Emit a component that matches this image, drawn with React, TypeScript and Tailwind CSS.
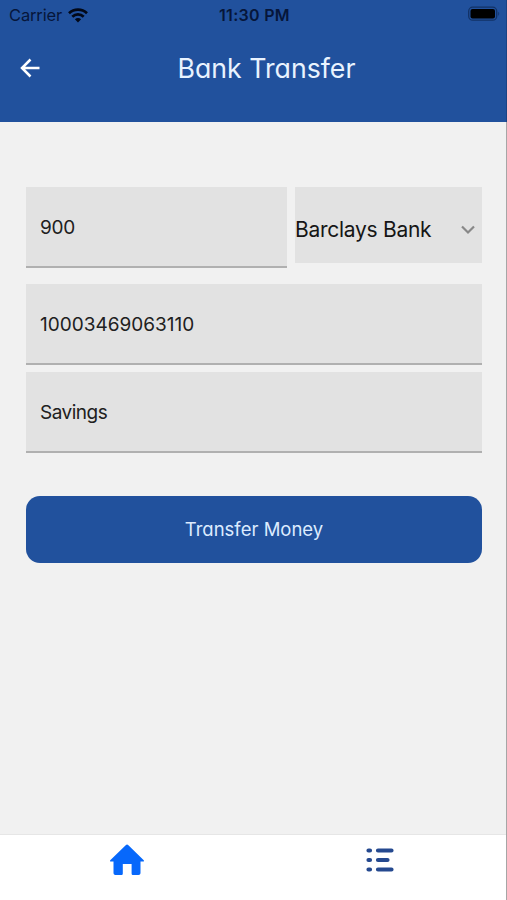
import React, { useState } from 'react';

const ROUNDED_FONT = "font-['Inter',sans-serif] [font-feature-settings:'cv11']";

const StatusBar: React.FC = () => (
  <div className="grid h-[30px] grid-cols-3 items-center pl-[9px] pr-[6px] text-[#06163a]">
    <div className="flex items-center gap-[6px]">
      <span className="text-[16.5px] leading-[28px] tracking-[-0.15px]">Carrier</span>
      <svg viewBox="0 0 20 15" className="h-[15px] w-[20px]" fill="none" stroke="#020817" strokeWidth="2.7">
        <path d="M1 5.2C6 .4 14 .4 19 5.2" />
        <path d="M4.3 8.7c3.2-3 8.2-3 11.4 0" />
        <path d="M6.9 11.2c1.8-1.6 4.400-1.600 6.200 0L10 14.400z" fill="#020817" stroke="none" />
      </svg>
    </div>
    <span className="text-center text-[16px] font-semibold leading-[30px] tracking-[0.3px]">11:30 PM</span>
    <svg viewBox="0 0 32 16" className="-mt-[2px] h-[16px] w-[32px] justify-self-end">
      <rect x=".7" y="1.2" width="28" height="13" rx="4" fill="none" stroke="#123266" strokeWidth="1.3" />
      <rect x="2.5" y="3" width="24.5" height="9.5" rx="2" fill="#000" />
      <path d="M30.300 5.700c1.200.6 1.200 3.500 0 4.100z" fill="#123266" />
    </svg>
  </div>
);

interface FieldProps {
  value: string;
  onChange: (value: string) => void;
  className?: string;
}

const Field: React.FC<FieldProps> = ({ value, onChange, className = '' }) => (
  <input
    value={value}
    onChange={(e) => onChange(e.target.value)}
    className={`block h-[81px] min-w-0 border-b-2 border-[#b0b0b0] bg-[#e2e2e2] px-[14px] pt-px text-[19px] text-[#202020] outline-none ${className}`}
  />
);

const App: React.FC = () => {
  const [amount, setAmount] = useState('900');
  const [account, setAccount] = useState('10003469063110');
  const [type, setType] = useState('Savings');

  return (
    <div className="flex h-[900px] w-[507px] flex-col border-r border-[#a6a6a6] bg-[#f1f1f1] font-['Inter',sans-serif]">
      {/* Header */}
      <header className="-mr-px h-[122px] shrink-0 border-r border-[#1b4383] bg-[#21519d]">
        <StatusBar />
        <div className="grid h-[76px] grid-cols-[60px_1fr_33px] items-center">
          <button className="pl-[20px]" aria-label="Back">
            <svg viewBox="0 0 20 20" className="h-[20px] w-[20px]" fill="none" stroke="#fff" strokeWidth="2.5">
              <path d="M19.500 10H2.500M10.500 1.500 2 10l8.500 8.500" />
            </svg>
          </button>
          <h1 className={`text-center text-[26.7px] font-normal text-[#e9f3ff] ${ROUNDED_FONT}`}>Bank Transfer</h1>
        </div>
      </header>

      {/* Form */}
      <main className="flex-1 pl-[26px] pr-[24px] pt-[65px]">
        <div className="flex gap-[8px]">
          <Field value={amount} onChange={setAmount} className="w-[261px] tracking-[-0.2px]" />
          <button className="flex h-[76px] flex-1 items-center justify-between bg-[#e2e2e2] pr-[7px] pt-[9px] text-[21px] text-[#161616]">
            <span className="whitespace-nowrap tracking-[-0.28px]">Barclays Bank</span>
            <svg viewBox="0 0 14 10" className="h-[10px] w-[14px]" fill="none" stroke="#888" strokeWidth="2.2">
              <path d="m1 1.500 6 6 6-6" />
            </svg>
          </button>
        </div>
        <Field value={account} onChange={setAccount} className="mt-[16px] w-full" />
        <Field value={type} onChange={setType} className="mt-[7px] w-full tracking-[-0.5px]" />
        <button className={`mt-[43px] block h-[67px] w-full rounded-[14px] bg-[#21519d] text-[18.5px] text-[#dcebff] ${ROUNDED_FONT}`}>
          Transfer Money
        </button>
      </main>

      {/* Bottom tabs */}
      <nav className="grid h-[66px] shrink-0 grid-cols-2 justify-items-center border-t border-[#e6e6e6] bg-white">
        <button className="self-start pt-[9px]" aria-label="Home">
          <svg viewBox="0 0 36 32" className="h-[32px] w-[36px]" fill="#0768fb">
            <path d="M16.700 1.200a2 2 0 0 1 2.700 0L34.500 16c.9.900.5 1.600-.5 1.600h-2.500v11.500c0 1.200-.8 1.900-2 1.900h-5.300c-1 0-1.600-.6-1.600-1.600V20h-8.800v9.400c0 1-.6 1.600-1.600 1.600H6.500c-1.200 0-2-.7-2-1.900V17.600H2c-1 0-1.400-.7-.5-1.600z" />
          </svg>
        </button>
        <button className="self-start pt-[12px]" aria-label="Transactions">
          <svg viewBox="0 0 28 26" className="h-[26px] w-[28px]" fill="none" stroke="#25498f" strokeWidth="4.2" strokeLinecap="round">
            <path d="M2.500 3.500h1.500M2.500 13h1.500M2.500 22.500h1.500M12 3.500h13.500M12 13h9.500M12 22.500h13.500" />
          </svg>
        </button>
      </nav>
    </div>
  );
};

export default App;
